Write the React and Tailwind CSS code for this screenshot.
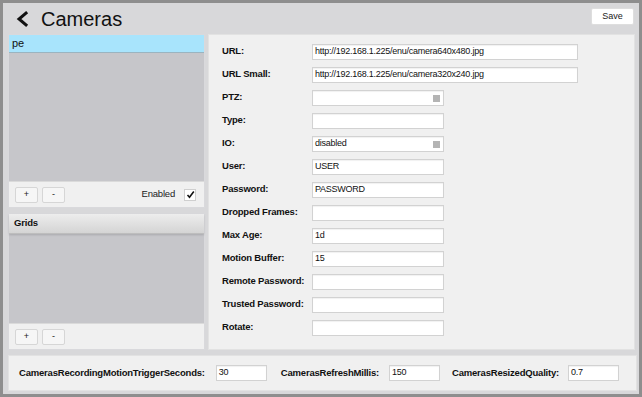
import React from 'react';

const font = { fontFamily: '"Liberation Sans", Arial, sans-serif' };

const fields = [
    { label: 'URL:', value: 'http://192.168.1.225/enu/camera640x480.jpg', wide: true },
    { label: 'URL Small:', value: 'http://192.168.1.225/enu/camera320x240.jpg', wide: true },
    { label: 'PTZ:', value: '', select: true },
    { label: 'Type:', value: '' },
    { label: 'IO:', value: 'disabled', select: true },
    { label: 'User:', value: 'USER' },
    { label: 'Password:', value: 'PASSWORD' },
    { label: 'Dropped Frames:', value: '' },
    { label: 'Max Age:', value: '1d' },
    { label: 'Motion Buffer:', value: '15' },
    { label: 'Remote Password:', value: '' },
    { label: 'Trusted Password:', value: '' },
    { label: 'Rotate:', value: '' },
];

const SmallButton = ({ children }) => (
    <button className="w-[23px] h-[16px] flex items-center justify-center bg-[#f6f6f6] border border-[#d6d6d6] rounded-[2px] text-[9px] text-[#222] leading-none">
        {children}
    </button>
);

const Input = ({ value, width, select }) => (
    <div
        className={`relative h-[16px] bg-white border border-[#d2d2d2] shadow-[inset_0_1px_1px_rgba(0,0,0,0.06)] flex items-center px-[2px] text-[9px] font-normal tracking-[-0.25px] text-[#111] whitespace-nowrap ${width}`}
    >
        {value}
        {select && <div className="absolute right-[3px] top-[4px] w-[7px] h-[7px] bg-[#b4b4b4]" />}
    </div>
);

const Toolbar = ({ children }) => (
    <div className="h-[26px] bg-[#f0f0f0] border-t border-[#dadada] flex items-center px-[6px] gap-[4px]">
        {children}
    </div>
);

export default function App() {
    return (
        <div style={font} className="w-[642px] h-[397px] bg-[#8e8e8e] p-[3px] overflow-hidden">
            <div className="w-full h-full bg-[#d8d8da] flex flex-col">
                {/* Header */}
                <div className="h-[31px] flex items-center pl-[12px] pr-[5px] shrink-0">
                    <svg width="16" height="18" viewBox="0 0 16 18" className="mr-[10px]">
                        <polyline points="11,3 4,9 11,15" fill="none" stroke="#111" strokeWidth="3" strokeLinecap="square" />
                    </svg>
                    <div className="text-[20px] text-[#111] leading-none">Cameras</div>
                    <div className="flex-1" />
                    <button className="w-[43px] h-[17px] bg-white border border-[#dedede] rounded-[2px] text-[9px] text-[#222] leading-none mt-[-5px]">
                        Save
                    </button>
                </div>

                {/* Main */}
                <div className="flex gap-[3px] px-[5px] pr-[4px] h-[316px] shrink-0">
                    <div className="w-[197px] flex flex-col gap-[5px]">
                        {/* Cameras list */}
                        <div className="h-[174px] bg-[#c6c6ca] border border-[#d9d9dc] flex flex-col">
                            <div className="h-[18px] bg-[#a8e4fc] border-b border-[#9ab4c0] flex items-center px-[3px] text-[11px] text-[#111]">
                                pe
                            </div>
                            <div className="flex-1" />
                            <Toolbar>
                                <SmallButton>+</SmallButton>
                                <SmallButton>-</SmallButton>
                                <div className="flex-1" />
                                <span className="text-[9.5px] tracking-[-0.2px] text-[#222] mr-[5px]">Enabled</span>
                                <div className="w-[12px] h-[12px] bg-white border border-[#cfcfcf] flex items-center justify-center mr-[2px]">
                                    <svg width="9" height="9" viewBox="0 0 9 9">
                                        <polyline points="1.5,5 3.5,7.2 7.8,1.5" fill="none" stroke="#111" strokeWidth="1.6" />
                                    </svg>
                                </div>
                            </Toolbar>
                        </div>

                        {/* Grids */}
                        <div className="h-[137px] bg-[#c6c6ca] border border-[#d9d9dc] flex flex-col">
                            <div className="h-[20px] bg-gradient-to-b from-[#ededed] to-[#d4d4d4] border-b border-[#bdbdbd] shadow-[0_1px_2px_rgba(0,0,0,0.15)] flex items-center px-[5px] text-[9.5px] tracking-[-0.2px] font-bold text-[#111]">
                                Grids
                            </div>
                            <div className="flex-1" />
                            <Toolbar>
                                <SmallButton>+</SmallButton>
                                <SmallButton>-</SmallButton>
                            </Toolbar>
                        </div>
                    </div>

                    {/* Details */}
                    <div className="flex-1 bg-[#f0f0f0] border border-[#e2e2e2] pt-[5px] pl-[13px]">
                        {fields.map((f) => (
                            <div key={f.label} className="h-[23px] flex items-center">
                                <div className="w-[90px] text-[9.5px] tracking-[-0.2px] font-bold text-[#111] whitespace-nowrap">{f.label}</div>
                                <Input value={f.value} select={f.select} width={f.wide ? 'w-[266px]' : 'w-[132px]'} />
                            </div>
                        ))}
                    </div>
                </div>

                {/* Settings footer */}
                <div className="mt-[5px] ml-[5px] mr-[2px] h-[36px] bg-[#f0f0f0] border border-[#e2e2e2] flex items-center pl-[10px] text-[9.5px] tracking-[-0.2px] font-bold text-[#111] whitespace-nowrap">
                    <span className="mr-[11px]">CamerasRecordingMotionTriggerSeconds:</span>
                    <Input value="30" width="w-[51px]" />
                    <span className="ml-[14px] mr-[10px]">CamerasRefreshMillis:</span>
                    <Input value="150" width="w-[51px]" />
                    <span className="ml-[12px] mr-[9px]">CamerasResizedQuality:</span>
                    <Input value="0.7" width="w-[51px]" />
                </div>
            </div>
        </div>
    );
}
